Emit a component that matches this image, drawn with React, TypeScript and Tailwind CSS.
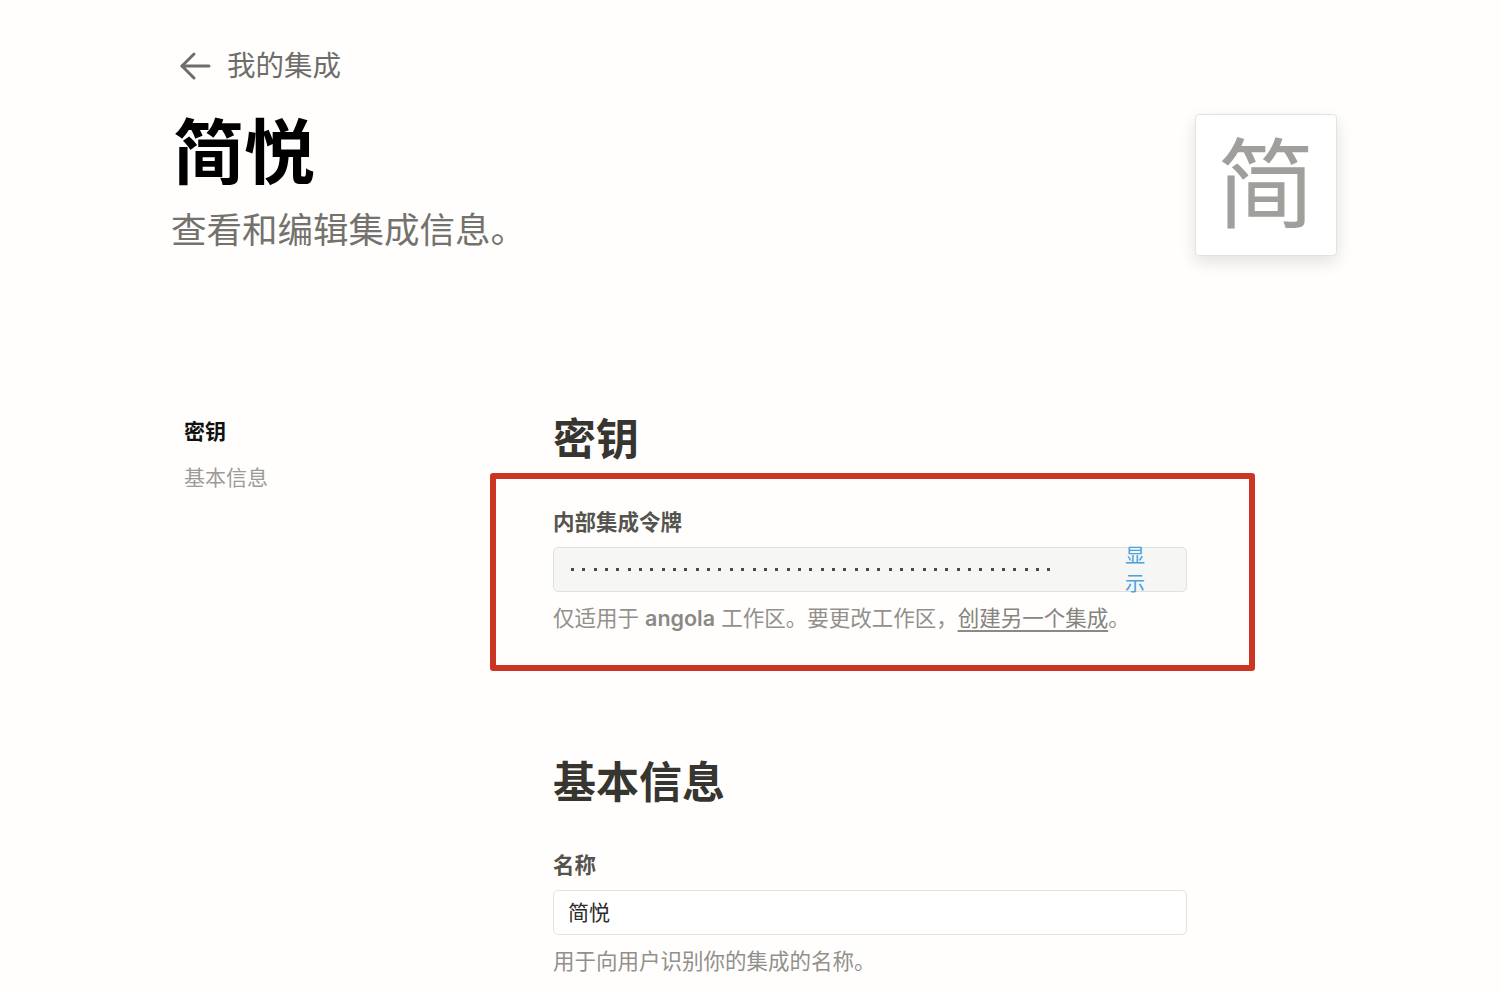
import React from "react";

const FONT = "font-['Inter','Noto_Sans_CJK_SC',sans-serif]";

function Dots() {
  const n = 43;
  return (
    <div className="flex flex-1 items-center gap-[8.35px] pl-[17px]">
      {Array.from({ length: n }).map((_, i) => (
        <span key={i} className="block h-[3px] w-[3px] bg-[#4c4b48]" />
      ))}
    </div>
  );
}

export default function App() {
  return (
    <div className={`min-h-screen bg-[#fffefc] ${FONT}`}>
      <div className="pl-[173px] pr-[163px]">
        {/* header */}
        <div className="flex justify-between">
          <div>
            <div className="mt-[46px] flex h-[40px] items-center">
              <svg width="32" height="30" viewBox="0 0 32 30" className="ml-[6px]" fill="none" stroke="#6e6d6a" strokeWidth="3" strokeLinecap="round" strokeLinejoin="round">
                <path d="M3 15H30" />
                <path d="M15 3L3 15L15 27" />
              </svg>
              <span className="ml-[16px] text-[28.5px] leading-[40px] text-[#6e6d6a]">我的集成</span>
            </div>
            <div className="mt-[26px] text-[71px] font-bold leading-[80px] text-black">简悦</div>
            <div className="mt-[17px] -ml-[2px] text-[35.5px] leading-[44px] text-[#73726e]">查看和编辑集成信息。</div>
          </div>
          <div className="mt-[114px] flex h-[142px] w-[142px] items-center justify-center rounded-[4px] border border-[#e3e2df] bg-white shadow-[0_6px_16px_rgba(15,15,15,0.12)]">
            <span className="text-[98px] leading-none text-[#a09f9b]">简</span>
          </div>
        </div>

        {/* body */}
        <div className="mt-[157px] flex">
          <div className="w-[317px] pl-[11px] pt-[4px]">
            <div className="flex flex-col gap-[16px]">
              <div className="text-[21px] font-bold leading-[30px] text-[#111]">密钥</div>
              <div className="text-[21px] leading-[30px] text-[#9b9a97]">基本信息</div>
            </div>
          </div>
          <div className="w-[765px]">
            <div className="pl-[63px] text-[43px] font-bold leading-[52px] text-[#37352f]">密钥</div>
            <div className="mt-[8px] rounded-[3px] border-[6px] border-[#cc3524] pb-[33px] pl-[57px] pr-[62px] pt-[29px]">
              <div className="text-[21.5px] font-semibold leading-[28px] text-[#55534e]">内部集成令牌</div>
              <div className="mt-[11px] flex h-[45px] items-center rounded-[5px] border border-[#e0e0dd] bg-[#f6f6f4]">
                <Dots />
                <div className="mr-[40px] w-[21px] text-[20px] leading-[28px] text-[#4aa3df]">显示</div>
              </div>
              <div className="mt-[12px] text-[21.5px] leading-[28px] text-[#91908c]">
                仅适用于 <span className="font-semibold text-[#8a8985]">angola</span> 工作区。要更改工作区，
                <span className="underline decoration-[#8a8985] underline-offset-[4px] text-[#85847f]">创建另一个集成</span>。
              </div>
            </div>

            <div className="mt-[85px] pl-[63px]">
              <div className="text-[43px] font-bold leading-[52px] text-[#37352f]">基本信息</div>
              <div className="mt-[43px] text-[21.5px] font-semibold leading-[28px] text-[#55534e]">名称</div>
              <div className="mt-[11px] flex h-[45px] w-[634px] items-center rounded-[5px] border border-[#e3e2df] bg-white px-[14px] text-[21px] text-[#2d2c29]">
                简悦
              </div>
              <div className="mt-[12px] text-[21.5px] leading-[28px] text-[#91908c]">用于向用户识别你的集成的名称。</div>
            </div>
          </div>
        </div>
      </div>
    </div>
  );
}
